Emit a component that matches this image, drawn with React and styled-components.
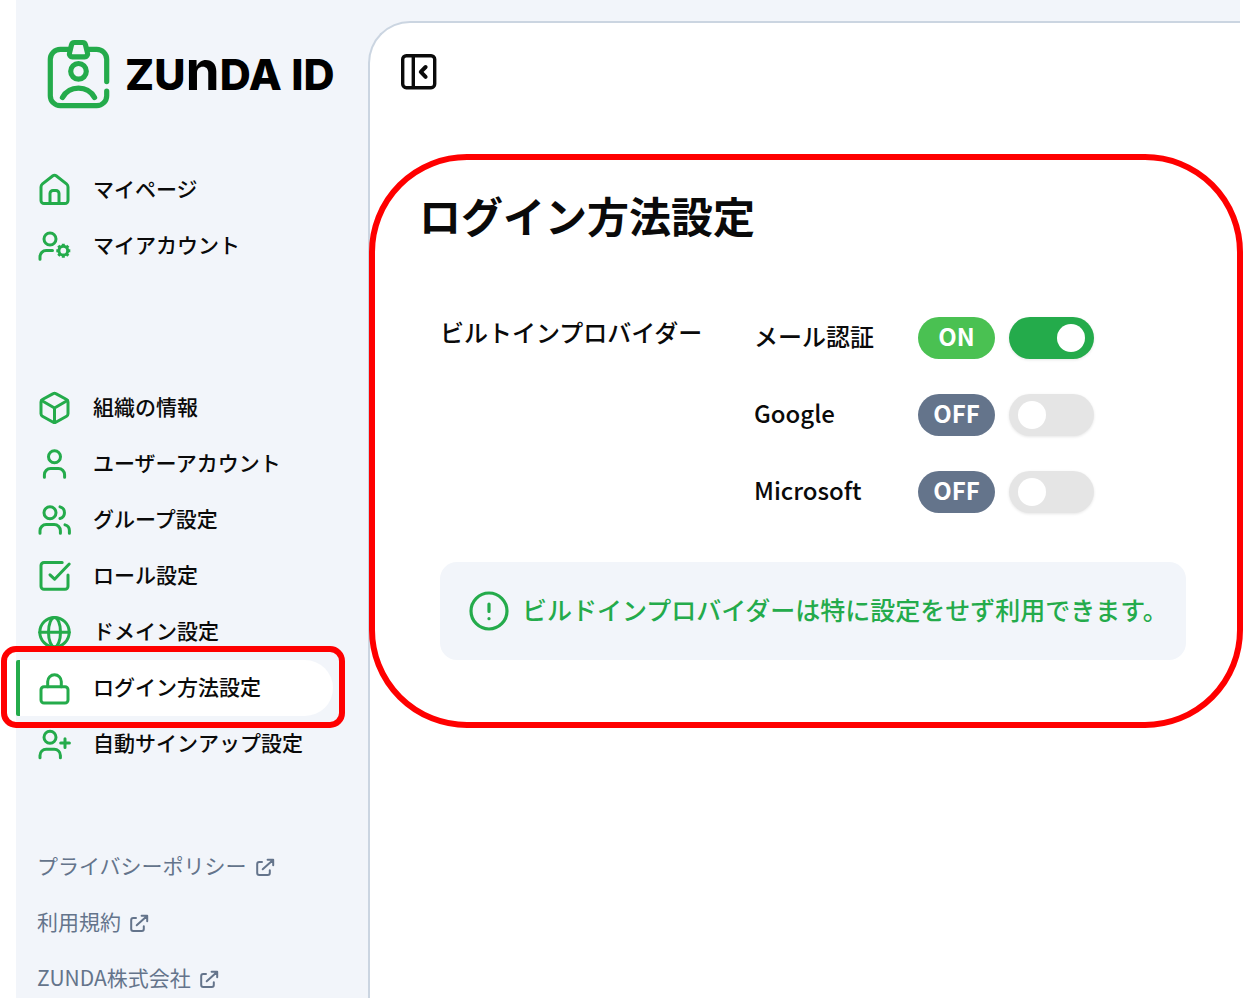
import React, { useState } from "react";
import styled, { createGlobalStyle, css } from "styled-components";

/* Icons */
const HomeIcon = () => (
  <StyledIcon viewBox="0 0 36 36" aria-hidden="true">
    <path d="M4 15a4 4 0 0 1 1.5-3.1L15.9 3.8a2.6 2.6 0 0 1 3.2 0l10.4 8.1A4 4 0 0 1 31 15v13.6a3 3 0 0 1-3 3H7a3 3 0 0 1-3-3Z" />
    <path d="M13 31.5V21.4a3 3 0 0 1 3-3h3a3 3 0 0 1 3 3v10.1" />
  </StyledIcon>
);

const UserCogIcon = () => (
  <StyledIcon viewBox="0 0 36 36" aria-hidden="true">
    <circle cx="13" cy="11" r="6" />
    <path d="M3 31.2v-2.4a6.2 6.2 0 0 1 6.2-6.2h6.3" />
    <circle cx="26.3" cy="22.7" r="4.4" />
    <path
      strokeLinecap="butt"
      d="M26.3 18.5v-2.8M26.3 26.9v2.8M22.1 22.7h-2.8M30.5 22.7h2.8M23.3 19.7l-2-2M29.3 25.7l2 2M23.3 25.7l-2 2M29.3 19.7l2-2"
    />
  </StyledIcon>
);

const CubeIcon = () => (
  <StyledIcon viewBox="0 0 36 36" aria-hidden="true">
    <path d="M16.2 3.6a2.6 2.6 0 0 1 2.6 0l10.8 5.9A2.8 2.8 0 0 1 31 11.9v11.9a2.8 2.8 0 0 1-1.4 2.4l-10.8 6a2.6 2.6 0 0 1-2.6 0l-10.8-6A2.8 2.8 0 0 1 4 23.8V11.9a2.8 2.8 0 0 1 1.4-2.4Z" />
    <path d="M4.6 10.5 17.5 18l12.9-7.5M17.5 18v14" />
  </StyledIcon>
);

const UserIcon = () => (
  <StyledIcon viewBox="0 0 36 36" aria-hidden="true">
    <circle cx="17.5" cy="10.7" r="6" />
    <path d="M7.4 31.2v-2.4a6.2 6.2 0 0 1 6.2-6.2h7.8a6.2 6.2 0 0 1 6.2 6.2v2.4" />
  </StyledIcon>
);

const UsersIcon = () => (
  <StyledIcon viewBox="0 0 36 36" aria-hidden="true">
    <circle cx="13" cy="10.7" r="6" />
    <path d="M3 31.2v-2.4a6.2 6.2 0 0 1 6.2-6.2h8a6.2 6.2 0 0 1 6.2 6.2v2.4" />
    <path d="M23 4.9a6 6 0 0 1 0 11.6M28 22.9a6 6 0 0 1 4.4 5.9v2.4" />
  </StyledIcon>
);

const CheckIcon = () => (
  <StyledIcon viewBox="0 0 36 36" aria-hidden="true">
    <path d="M25.2 4.4H7a3 3 0 0 0-3 3v20.9a3 3 0 0 0 3 3h21a3 3 0 0 0 3-3V17" />
    <path d="m13 16.8 4.6 4.4L32.2 6" />
  </StyledIcon>
);

const GlobeIcon = () => (
  <StyledIcon viewBox="0 0 36 36" aria-hidden="true">
    <circle cx="17.5" cy="18.2" r="14.7" />
    <ellipse cx="17.5" cy="18.2" rx="6" ry="14.7" />
    <path d="M2.8 18.2h29.4" />
  </StyledIcon>
);

const LockIcon = () => (
  <StyledIcon viewBox="0 0 36 36" aria-hidden="true">
    <rect x="4" y="16.8" width="27" height="16.2" rx="3" />
    <path d="M10.7 16.8v-5.2a6.8 6.8 0 0 1 13.6 0v5.2" />
  </StyledIcon>
);

const UserPlusIcon = () => (
  <StyledIcon viewBox="0 0 36 36" aria-hidden="true">
    <circle cx="13" cy="11.2" r="6" />
    <path d="M3 31.8v-2.4a6.2 6.2 0 0 1 6.2-6.2h8a6.2 6.2 0 0 1 6.2 6.2v2.4" />
    <path d="M28 12.7v8.8M23.7 17.1h8.7" />
  </StyledIcon>
);

const ExternalIcon = () => (
  <StyledExternalIcon viewBox="0 0 20 20" aria-hidden="true">
    <path d="M7 5H4.2a2 2 0 0 0-2 2v9a2 2 0 0 0 2 2h8.6a2 2 0 0 0 2-2v-2.8" />
    <path d="m7.7 12.3 10.3-9.4M12.6 2.7h5.6v5.6" />
  </StyledExternalIcon>
);

const LogoMark = () => (
  <StyledLogoMark viewBox="0 0 66 72" aria-hidden="true">
    <path d="M23.5 11.3H14.3a10 10 0 0 0-10 10v36.4a10 10 0 0 0 10 10h36.4a10 10 0 0 0 10-10v-4.5M60.7 43.6V21.3a10 10 0 0 0-10-10h-9.2" />
    <path d="M28.4 4.5h8.2a3 3 0 0 1 2.9 2.3l2 8.2a3 3 0 0 1-2.9 3.8H26.4a3 3 0 0 1-2.9-3.8l2-8.2a3 3 0 0 1 2.9-2.3Z" />
    <circle cx="32.5" cy="33.3" r="7.8" />
    <path d="M16.4 59.6a18.5 18.5 0 0 1 32.2 0" />
  </StyledLogoMark>
);

const accountMenu = [
  { label: "マイページ", icon: HomeIcon },
  { label: "マイアカウント", icon: UserCogIcon },
];

const adminMenu = [
  { label: "組織の情報", icon: CubeIcon },
  { label: "ユーザーアカウント", icon: UserIcon },
  { label: "グループ設定", icon: UsersIcon },
  { label: "ロール設定", icon: CheckIcon },
  { label: "ドメイン設定", icon: GlobeIcon },
  { label: "ログイン方法設定", icon: LockIcon, active: true },
  { label: "自動サインアップ設定", icon: UserPlusIcon },
];

const footerLinks = ["プライバシーポリシー", "利用規約", "ZUNDA株式会社"];

const Menu = ({ items }) => (
  <StyledMenu>
    {items.map(({ label, icon: Icon, active }) => (
      <StyledMenuItem key={label} $active={active}>
        <StyledMenuLink href="#" aria-current={active ? "page" : undefined}>
          <Icon />
          <StyledLabel>{label}</StyledLabel>
        </StyledMenuLink>
        {active && <StyledItemMarker />}
      </StyledMenuItem>
    ))}
  </StyledMenu>
);

const App = () => {
  const [providers, setProviders] = useState([
    { id: "mail", label: "メール認証", enabled: true },
    { id: "google", label: "Google", enabled: false },
    { id: "microsoft", label: "Microsoft", enabled: false },
  ]);

  const toggle = (id) => {
    setProviders(providers.map((p) => (p.id === id ? { ...p, enabled: !p.enabled } : p)));
  };

  return (
    <>
      <GlobalStyle />
      <StyledPage>
        <StyledSidebar>
          <StyledLogo href="#">
            <LogoMark />
            <StyledLogoText>ZU<span>n</span>DA ID</StyledLogoText>
          </StyledLogo>
          <StyledNav>
            <Menu items={accountMenu} />
            <Menu items={adminMenu} />
          </StyledNav>
          <StyledFooter>
            {footerLinks.map((label) => (
              <StyledFooterLink key={label} href="#">
                <StyledLabel>{label}</StyledLabel>
                <ExternalIcon />
              </StyledFooterLink>
            ))}
          </StyledFooter>
        </StyledSidebar>

        <StyledMain>
          <StyledCollapseButton type="button" aria-label="サイドバーを閉じる">
            <svg viewBox="0 0 36 36" aria-hidden="true">
              <rect x="1.7" y="1.7" width="32" height="32" rx="3.6" />
              <path strokeLinecap="butt" d="M12.3 2v31.5" />
              <path strokeWidth="4" d="m24.6 13-4.8 4.9 4.8 4.9" />
            </svg>
          </StyledCollapseButton>

          <StyledSection>
            <StyledTitle>ログイン方法設定</StyledTitle>
            <StyledGroup role="group" aria-labelledby="builtin">
              <StyledGroupName id="builtin">ビルトインプロバイダー</StyledGroupName>
              <StyledProviders>
                {providers.map(({ id, label, enabled }) => (
                  <StyledProvider key={id}>
                    <StyledProviderName htmlFor={id}>{label}</StyledProviderName>
                    <StyledBadge $on={enabled}>{enabled ? "ON" : "OFF"}</StyledBadge>
                    <StyledSwitch
                      id={id}
                      type="checkbox"
                      role="switch"
                      checked={enabled}
                      onChange={() => toggle(id)}
                    />
                  </StyledProvider>
                ))}
              </StyledProviders>
            </StyledGroup>
            <StyledNotice>
              <svg viewBox="0 0 40 40" aria-hidden="true">
                <circle cx="20" cy="20" r="18" />
                <path d="M20 13v7.4M20 27.6v.1" />
              </svg>
              <StyledLabel>ビルドインプロバイダーは特に設定をせず利用できます。</StyledLabel>
            </StyledNotice>
            <StyledSectionMarker />
          </StyledSection>
        </StyledMain>
      </StyledPage>
    </>
  );
};

export default App;

const GlobalStyle = createGlobalStyle`
  :root {
    --green: #24ab4b;
    --green-light: #4ac152;
    --slate: #64748b;
    --base: #f2f5fa;
    --line: #cbd5e1;
    --text: #0a0a0a;
    --mark: #ff0000;
  }
  * {
    box-sizing: border-box;
  }
  body {
    margin: 0;
    background-color: #fff;
    color: var(--text);
    font-family: "Noto Sans CJK JP", sans-serif;
  }
  #root {
    overflow: hidden;
  }
  a {
    color: inherit;
    text-decoration: none;
  }
`

const StyledPage = styled.div`
  display: flex;
  height: 100vh;
  margin: 0 4px 0 16px;
  background-color: var(--base);
`

const StyledSidebar = styled.aside`
  position: relative;
  z-index: 1;
  display: flex;
  flex-direction: column;
  flex: 0 0 352px;
`

const StyledLogo = styled.a`
  display: flex;
  align-items: center;
  gap: 13px;
  padding: 38px 0 0 30px;
`

const StyledLogoMark = styled.svg`
  width: 66px;
  height: 72px;
  fill: none;
  stroke: var(--green);
  stroke-width: 5.2;
  stroke-linecap: round;
  stroke-linejoin: round;
`

const StyledLogoText = styled.span`
  color: #000;
  font-family: Inter, sans-serif;
  font-size: 43px;
  font-weight: 800;
  line-height: 72px;
  white-space: nowrap;
  span {
    font-size: 55px;
    font-weight: 700;
    line-height: 1px;
  }
`

const StyledNav = styled.nav`
  display: flex;
  flex-direction: column;
  gap: 106px;
  padding: 52px 35px 0 0;
`

const StyledMenu = styled.ul`
  margin: 0;
  padding: 0;
  list-style: none;
`

const StyledMenuItem = styled.li`
  position: relative;
  ${({ $active }) => $active && css`
    z-index: 1;
    border-radius: 2px 28px 28px 2px;
    background: linear-gradient(to right, var(--green) 4px, #fff 4px);
  `}
`

const StyledMenuLink = styled.a`
  display: flex;
  align-items: center;
  gap: 20px;
  height: 56px;
  padding-left: 21px;
  font-size: 21px;
  font-weight: 500;
  white-space: nowrap;
`

/* lifts the text so that it is optically centred next to an icon */
const StyledLabel = styled.span`
  padding-bottom: 4px;
`

const StyledIcon = styled.svg`
  flex: none;
  width: 36px;
  height: 36px;
  fill: none;
  stroke: var(--green);
  stroke-width: 3;
  stroke-linecap: round;
  stroke-linejoin: round;
`

const StyledItemMarker = styled.span`
  position: absolute;
  inset: -14px -12px -12px -15px;
  border: 6px solid var(--mark);
  border-radius: 15px;
  pointer-events: none;
`

const StyledFooter = styled.footer`
  display: flex;
  flex-direction: column;
  min-height: 0;
  padding: 67px 0 0 21px;
`

const StyledFooterLink = styled.a`
  display: flex;
  flex: none;
  align-items: center;
  gap: 8px;
  height: 56px;
  color: var(--slate);
  font-size: 21px;
`

const StyledExternalIcon = styled.svg`
  width: 20px;
  height: 20px;
  fill: none;
  stroke: currentColor;
  stroke-width: 2;
  stroke-linecap: round;
  stroke-linejoin: round;
`

const StyledMain = styled.main`
  flex: 1;
  min-width: 0;
  margin-top: 21px;
  padding-top: 31px;
  border-top: 2px solid var(--line);
  border-left: 2px solid var(--line);
  border-top-left-radius: 42px;
  background-color: #fff;
`

const StyledCollapseButton = styled.button`
  display: block;
  width: 36px;
  height: 36px;
  margin-left: 31px;
  padding: 0;
  border: 0;
  background: none;
  cursor: pointer;
  svg {
    display: block;
    fill: none;
    stroke: var(--text);
    stroke-width: 3.4;
    stroke-linecap: round;
    stroke-linejoin: round;
  }
`

const StyledSection = styled.section`
  position: relative;
  margin-top: 64px;
  padding: 31px 54px 68px 49px;
`

const StyledTitle = styled.h1`
  margin: 0;
  font-size: 42px;
  font-weight: 700;
  line-height: 60px;
`

const StyledGroup = styled.div`
  display: flex;
  gap: 49px;
  margin-top: 72px;
  padding-left: 21px;
  font-size: 24px;
  font-weight: 500;
`

const StyledGroupName = styled.div`
  width: 265px;
  line-height: 30px;
  white-space: nowrap;
`

const StyledProviders = styled.div`
  display: flex;
  flex-direction: column;
  gap: 35px;
`

const StyledProvider = styled.div`
  display: grid;
  grid-template-columns: 150px 77px 85px;
  column-gap: 14px;
  height: 42px;
`

const StyledProviderName = styled.label`
  line-height: 38px;
`

const StyledBadge = styled.span`
  border-radius: 21px;
  background-color: ${({ $on }) => ($on ? "var(--green-light)" : "var(--slate)")};
  color: #fff;
  font-weight: 700;
  line-height: 38px;
  text-align: center;
`

const StyledSwitch = styled.input`
  appearance: none;
  display: flex;
  align-items: center;
  width: 85px;
  height: 42px;
  margin: 0;
  padding: 0 9px;
  border-radius: 21px;
  background-color: #e5e5e5;
  box-shadow: 0 1px 3px rgba(0, 0, 0, 0.1);
  cursor: pointer;
  &::before {
    content: "";
    width: 28px;
    height: 28px;
    border-radius: 50%;
    background-color: #fff;
  }
  &:checked {
    justify-content: flex-end;
    background-color: var(--green);
  }
`

const StyledNotice = styled.p`
  display: flex;
  align-items: center;
  gap: 13px;
  min-height: 98px;
  margin: 49px 0 0 21px;
  padding: 0 8px 0 29px;
  border-radius: 17px;
  background-color: var(--base);
  color: var(--green);
  font-size: 25px;
  font-weight: 500;
  svg {
    flex: none;
    width: 40px;
    height: 40px;
    fill: none;
    stroke: currentColor;
    stroke-width: 3.2;
    stroke-linecap: round;
  }
`

const StyledSectionMarker = styled.span`
  position: absolute;
  inset: 0 -3px 0 -1px;
  border: 6px solid var(--mark);
  border-radius: 98px;
  pointer-events: none;
`
